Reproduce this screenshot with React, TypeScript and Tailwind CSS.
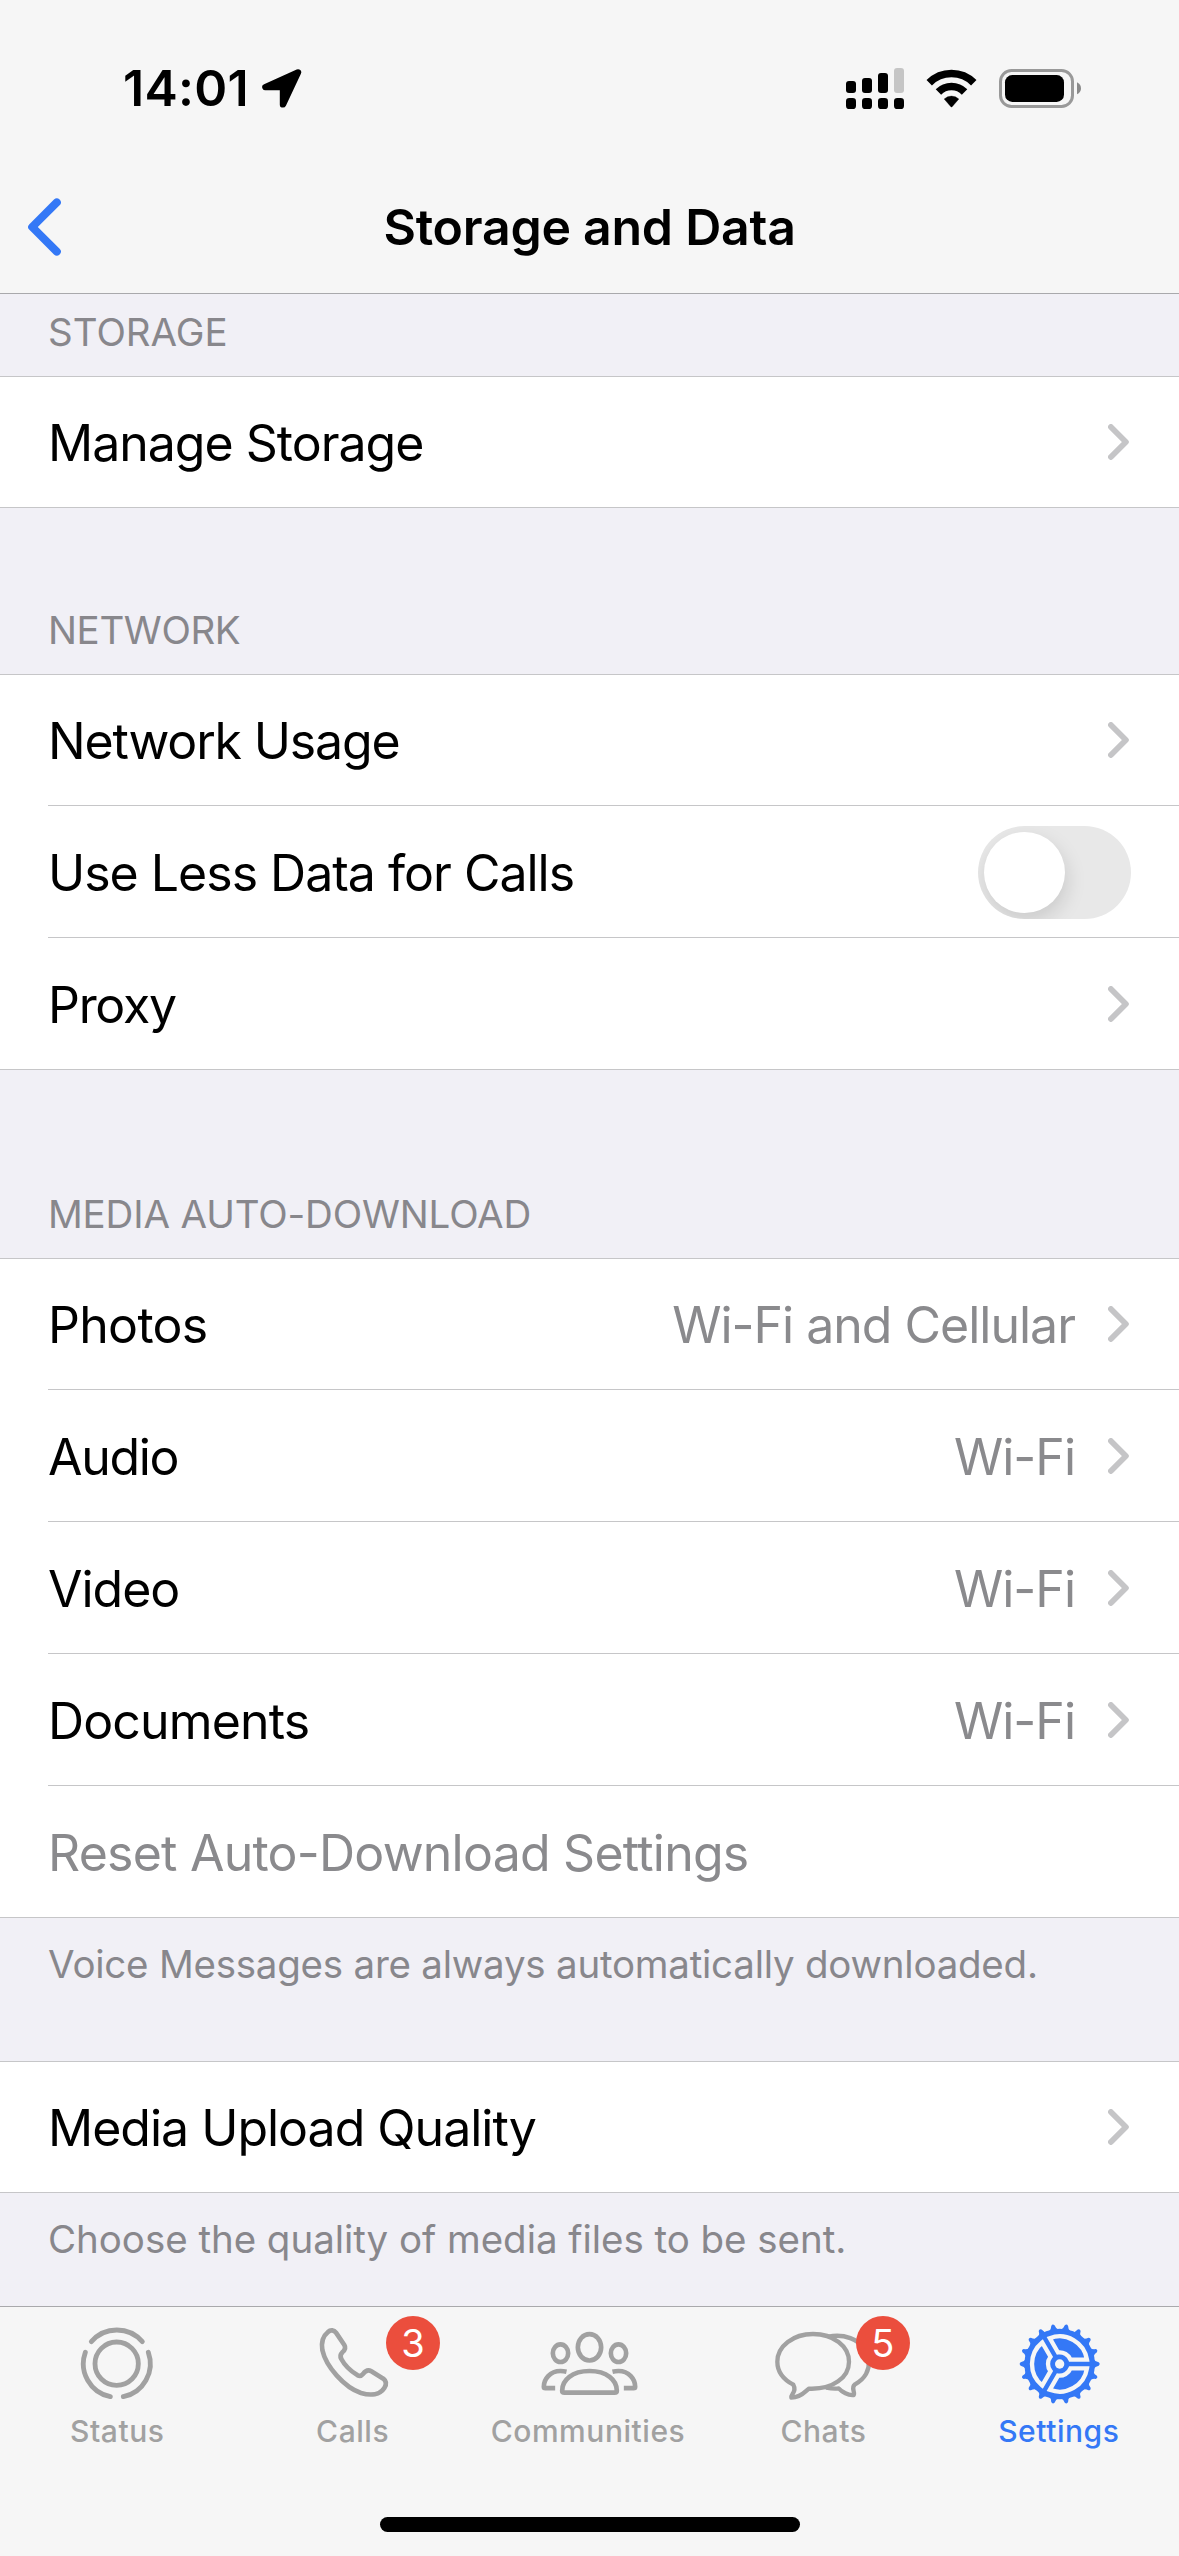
import type { ReactNode } from "react";

type Row = {
  label: string;
  value?: string;
  toggle?: boolean;
  disabled?: boolean;
  tracking?: string;
};

const networkRows: Row[] = [
  { label: "Network Usage", tracking: "tracking-[-0.023em]" },
  { label: "Use Less Data for Calls", toggle: true },
  { label: "Proxy", tracking: "tracking-[-0.026em]" },
];

const mediaRows: Row[] = [
  { label: "Photos", value: "Wi-Fi and Cellular", tracking: "tracking-[-0.014em]" },
  { label: "Audio", value: "Wi-Fi", tracking: "tracking-[-0.026em]" },
  { label: "Video", value: "Wi-Fi" },
  { label: "Documents", value: "Wi-Fi", tracking: "tracking-[-0.017em]" },
  { label: "Reset Auto-Download Settings", disabled: true, tracking: "tracking-[-0.0153em]" },
];

function StatusBar() {
  return (
    <div className="flex h-[161px] items-center justify-between pt-[15px] pr-[98px] pl-[123px]">
      <div className="flex items-center gap-[13px]">
        <span className="text-[50px] leading-none font-semibold tracking-[0.006em]">14:01</span>
        <svg width="40" height="39" viewBox="0 0 40 39">
          <path
            d="M36 3.4 L3.4 18.1 H21 V35.4 Z"
            fill="black"
            stroke="black"
            strokeWidth="6.4"
            strokeLinejoin="round"
          />
        </svg>
      </div>
      <div className="flex items-center gap-[22px]">
        {/* Dual SIM signal */}
        <svg width="58" height="41" viewBox="198 81 174 123">
          <rect x="198" y="120" width="30" height="36" rx="9" />
          <rect x="246" y="111" width="30" height="45" rx="9" />
          <rect x="294" y="96" width="30" height="60" rx="9" />
          <rect x="342" y="81" width="30" height="75" rx="9" fill="#c5c5c5" />
          <rect x="198" y="171" width="30" height="33" rx="10" />
          <rect x="246" y="171" width="30" height="33" rx="10" />
          <rect x="294" y="171" width="30" height="33" rx="10" />
          <rect x="342" y="171" width="30" height="33" rx="10" />
        </svg>
        <svg width="51" height="41" viewBox="438.5 81 153 123">
          <g fill="none" stroke="black" strokeWidth="23">
            <path d="M448.2 125.2 A94.5 94.5 0 0 1 581.8 125.2" />
            <path d="M475.8 152.8 A55.5 55.5 0 0 1 554.2 152.8" />
          </g>
          <path d="M493 174 A32 32 0 0 1 537 174 L517 197 Q515 199 513 197 Z" stroke="black" strokeWidth="1" />
        </svg>
        <svg width="82" height="41" viewBox="657 81 246 123">
          <rect x="661.5" y="88.5" width="216" height="108" rx="33" fill="none" stroke="#999999" strokeWidth="9" />
          <rect x="675" y="102" width="177" height="81" rx="22" />
          <path d="M891 124 Q903 130 903 142 Q903 154 891 160 Z" fill="#8a8a8a" />
        </svg>
      </div>
    </div>
  );
}

function NavBar() {
  return (
    <div className="grid h-[132px] grid-cols-[1fr_auto_1fr] items-center pl-7">
      <svg width="33" height="58" viewBox="0 0 33 58">
        <path
          d="M28.8 4.4 L4.2 29 L28.8 53.6"
          fill="none"
          stroke="#3478f6"
          strokeWidth="8"
          strokeLinecap="round"
          strokeLinejoin="round"
        />
      </svg>
      <h1 className="pr-7 text-[50px] leading-none font-semibold tracking-[-0.005em]">Storage and Data</h1>
    </div>
  );
}

function Chevron() {
  return (
    <svg width="21" height="36" viewBox="0 0 21 36" className="shrink-0">
      <path
        d="M2.9 3 L17.9 18 L2.9 33"
        fill="none"
        stroke="#c5c5c7"
        strokeWidth="5.8"
        strokeLinecap="round"
        strokeLinejoin="round"
      />
    </svg>
  );
}

function Toggle() {
  return (
    <div className="mt-0.5 h-[93px] w-[153px] shrink-0 overflow-hidden rounded-full bg-[#e8e8e8] p-1.5">
      <div className="size-[81px] rounded-full bg-white shadow-[2px_8px_20px_rgba(0,0,0,0.13)]" />
    </div>
  );
}

function ListGroup({ rows }: { rows: Row[] }) {
  return (
    <div className="border-y border-[#c6c6c8] bg-white pl-12">
      {rows.map((row, i) => (
        <div
          key={row.label}
          className={`flex items-center justify-between ${i > 0 ? "h-[132px] border-t border-[#c6c6c8]" : "h-[130px]"} ${row.toggle ? "pr-12" : "pr-[50px]"}`}
        >
          <span
            className={`pt-0.5 text-[50px] leading-none ${row.tracking ?? "tracking-[-0.02em]"} ${row.disabled ? "text-[#8a8a8d]" : "text-black"}`}
          >
            {row.label}
          </span>
          {row.toggle && <Toggle />}
          {!row.toggle && !row.disabled && (
            <div className="flex items-center gap-[33px]">
              {row.value && (
                <span className="pt-0.5 text-[50px] leading-none tracking-[-0.02em] text-[#8a8a8d]">{row.value}</span>
              )}
              <Chevron />
            </div>
          )}
        </div>
      ))}
    </div>
  );
}

function SectionTitle({ className, children }: { className: string; children: ReactNode }) {
  return (
    <div className={`flex items-end pb-[21px] pl-12 text-[38.5px] leading-[46px] text-[#88878c] ${className}`}>
      {children}
    </div>
  );
}

function SectionNote({ className, children }: { className: string; children: ReactNode }) {
  return <p className={`pt-[23px] pl-12 text-[38.5px] leading-[46px] text-[#88878c] ${className}`}>{children}</p>;
}

function Badge({ className, count }: { className: string; count: number }) {
  return (
    <span
      className={`absolute -top-1.5 flex size-[54px] items-center justify-center rounded-full bg-[#eb4e3d] text-[38px] leading-none text-white ${className}`}
    >
      {count}
    </span>
  );
}

function Tab({ label, active, children }: { label: string; active?: boolean; children: ReactNode }) {
  return (
    <div className={`flex flex-1 flex-col items-center gap-[7px] ${active ? "text-[#3478f6]" : "text-[#a1a1a1]"}`}>
      <div className="relative h-[84px]">{children}</div>
      <span className="pr-px text-[30px] leading-9 font-medium tracking-[0.018em]">{label}</span>
    </div>
  );
}

const gearTeeth = Array.from({ length: 18 }, (_, i) => i * 20);

function TabBar() {
  return (
    <div className="flex h-[250px] flex-col justify-between border-t border-[#a9a9ac] bg-[#f6f6f6] pt-[15px] pb-6">
      <div className="flex pr-0.5">
        <Tab label="Status">
          <svg width="80" height="84" viewBox="114 66 240 252" fill="none" stroke="currentColor" strokeWidth="14.5" strokeLinecap="round">
            <circle cx="230" cy="191" r="65" />
            <path d="M154 125 A101 101 0 0 1 307 125" />
            <path d="M136 157 A101 101 0 0 0 211 290" />
            <path d="M325 157 A101 101 0 0 1 250 290" />
          </svg>
        </Tab>
        <Tab label="Calls">
          <svg width="80" height="84" viewBox="821 66 240 252" fill="none" stroke="currentColor" strokeWidth="14" strokeLinejoin="round">
            <path d="M866 96 C874 88 884 90 890 98 L915 135 C920 143 917 150 909 157 C902 164 902 170 906 177 C916 196 935 214 955 226 C961 229 966 228 971 222 C979 211 988 209 996 214 L1032 236 C1041 243 1042 253 1035 264 C1022 284 995 288 965 279 C915 262 860 200 849 150 C845 125 851 108 866 96 Z" />
          </svg>
          <Badge className="left-[73px]" count={3} />
        </Tab>
        <Tab label="Communities">
          <svg width="100" height="84" viewBox="175.5 66 300 252" fill="none" stroke="currentColor" strokeWidth="14" strokeLinejoin="round">
            <ellipse cx="327" cy="142" rx="35" ry="39.5" />
            <ellipse cx="240" cy="159.5" rx="23" ry="26.5" />
            <ellipse cx="414" cy="159.5" rx="23" ry="26.5" />
            <path d="M245 272 C245 240 275 213 327 213 S409 240 409 272 Q409 278 402 278 H252 Q245 278 245 272 Z" />
            <path d="M258 215 Q249 213 240 213 C208 213 190 238 190 260 Q190 264.5 195 264.5 H224" />
            <path d="M396 215 Q405 213 414 213 C446 213 464 238 464 260 Q464 264.5 459 264.5 H430" />
          </svg>
        </Tab>
        <Tab label="Chats">
          <svg width="106" height="84" viewBox="93 66 318 252" fill="none" stroke="currentColor" strokeWidth="13" strokeLinejoin="round">
            <path d="M265 110 C315 100 355 120 372 145 C390 172 390 200 378 222 C370 236 358 246 345 253 C331 263 347 278 341 285 C325 287 306 276 296 265 Q282 267 258 263" />
            <path d="M207 266 C197 272 185 293 154 293 C151 283 172 276 160 254 C130 238 112 215 112 185 C112 138 160 102 219 102 C280 102 327 138 327 185 C327 231 280 269 207 266 Z" fill="#f6f6f6" />
          </svg>
          <Badge className="left-[85px]" count={5} />
        </Tab>
        <Tab label="Settings" active>
          <svg width="86" height="84" viewBox="829 66 258 252">
            <g transform="translate(960 192)" fill="currentColor">
              <circle r="106" />
              {gearTeeth.map((angle) => (
                <path key={angle} d="M102 -15 Q106 -7 117 -5 Q123 0 117 5 Q106 7 102 15 Z" transform={`rotate(${angle})`} />
              ))}
              {[0, 120, 240].map((angle) => (
                <path
                  key={angle}
                  d="M82 -13 A83 83 0 0 0 -29.7 -77.5 L-5 -34.6 A35 35 0 0 1 32.5 -13 Z"
                  transform={`rotate(${angle})`}
                  stroke="#f6f6f6"
                  strokeWidth="13"
                />
              ))}
              <circle r="14" fill="#f6f6f6" />
            </g>
          </svg>
        </Tab>
      </div>
      <div className="h-[15px] w-[420px] self-center rounded-full bg-black" />
    </div>
  );
}

export default function App() {
  return (
    <div className="flex h-[2556px] w-[1179px] flex-col overflow-hidden bg-[#f1f0f6] font-['Inter','Liberation_Sans',sans-serif] text-black">
      <header className="border-b border-[#a9a9ac] bg-[#f6f6f6]">
        <StatusBar />
        <NavBar />
      </header>

      <main className="flex-1">
        <SectionTitle className="h-[82px]">STORAGE</SectionTitle>
        <ListGroup rows={[{ label: "Manage Storage" }]} />

        <SectionTitle className="h-[166px] tracking-[-0.01em]">NETWORK</SectionTitle>
        <ListGroup rows={networkRows} />

        <SectionTitle className="h-[188px] tracking-[-0.004em]">MEDIA AUTO-DOWNLOAD</SectionTitle>
        <ListGroup rows={mediaRows} />
        <SectionNote className="h-[143px] tracking-[-0.006em]">
          Voice Messages are always automatically downloaded.
        </SectionNote>

        <ListGroup rows={[{ label: "Media Upload Quality" }]} />
        <SectionNote className="h-[113px] tracking-[-0.001em]">Choose the quality of media files to be sent.</SectionNote>
      </main>

      <TabBar />
    </div>
  );
}
